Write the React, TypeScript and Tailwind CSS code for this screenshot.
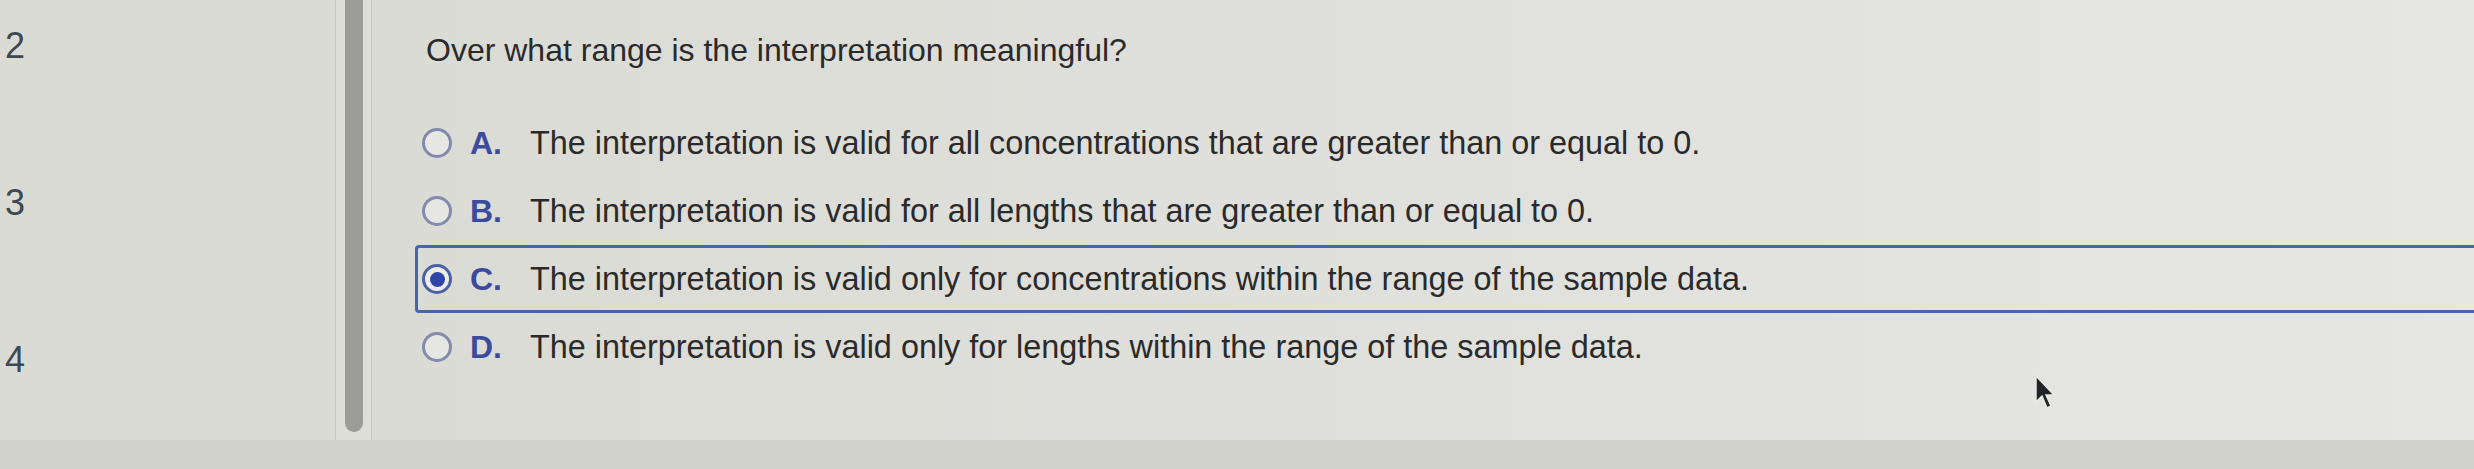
const options = [
  { letter: "A.", text: "The interpretation is valid for all concentrations that are greater than or equal to 0." },
  { letter: "B.", text: "The interpretation is valid for all lengths that are greater than or equal to 0." },
  { letter: "C.", text: "The interpretation is valid only for concentrations within the range of the sample data." },
  { letter: "D.", text: "The interpretation is valid only for lengths within the range of the sample data." },
];

const selected = "C.";

function Radio({ checked }: { checked: boolean }) {
  if (checked) {
    return (
      <span className="flex h-[30px] w-[30px] shrink-0 items-center justify-center rounded-full border-[3px] border-[#4b5fa6] bg-[#ecece8]">
        <span className="h-[15px] w-[15px] rounded-full bg-[#2c45a6]" />
      </span>
    );
  }
  return <span className="h-[30px] w-[30px] shrink-0 rounded-full border-[3px] border-[#8389ad] bg-[#e6e6e2]" />;
}

export default function App() {
  return (
    <div className="relative flex h-[469px] w-full flex-col overflow-hidden bg-[#d3d3ce] font-['Liberation_Sans',Arial,sans-serif]">
      <div className="flex h-[440px] shrink-0">
        {/* question numbers */}
        <div className="flex w-[335px] shrink-0 flex-col gap-[121px] bg-[#dbdbd6] pl-[5px] pt-[28px] text-[36px] leading-none text-[#3e4852]">
          <span>2</span>
          <span>3</span>
          <span>4</span>
        </div>

        {/* scrollbar */}
        <div className="flex w-[37px] shrink-0 border-x border-[#c6c6c1] bg-[#dedeD9] pl-[9px]">
          <div className="h-[432px] w-[18px] rounded-b-full bg-[#9b9b98]" />
        </div>

        {/* question panel */}
        <div className="flex flex-1 flex-col bg-gradient-to-r from-[#dbdbd6] via-[#e0e0dc] to-[#e6e6e2]">
          <h1 className="pl-[54px] pt-[34px] text-[32px] leading-none text-[#2a2a2a]">
            Over what range is the interpretation meaningful?
          </h1>

          <div className="mt-[43px] flex flex-col pl-[43px]">
            {options.map((o) => {
              const checked = o.letter === selected;
              return (
                <div
                  key={o.letter}
                  className={
                    checked
                      ? "flex h-[68px] items-center rounded-l-[4px] border-[3px] border-r-0 border-[#4767a3] pl-[4px]"
                      : "flex h-[68px] items-center border-[3px] border-transparent pl-[4px]"
                  }
                >
                  <Radio checked={checked} />
                  <span className="ml-[18px] w-[60px] shrink-0 text-[32px] font-bold text-[#3a4a9c]">{o.letter}</span>
                  <span className="text-[32.4px] text-[#2a2a2a]">{o.text}</span>
                </div>
              );
            })}
          </div>
        </div>
      </div>

      {/* mouse pointer */}
      <svg className="absolute left-[2034px] top-[374px]" width="24" height="38" viewBox="0 0 24 38">
        <path d="M2 2 L2 28 L8 22 L13 34 L17 32 L12 21 L20 21 Z" fill="#1f2326" stroke="#e8e8e4" strokeWidth="1.5" />
      </svg>
    </div>
  );
}
